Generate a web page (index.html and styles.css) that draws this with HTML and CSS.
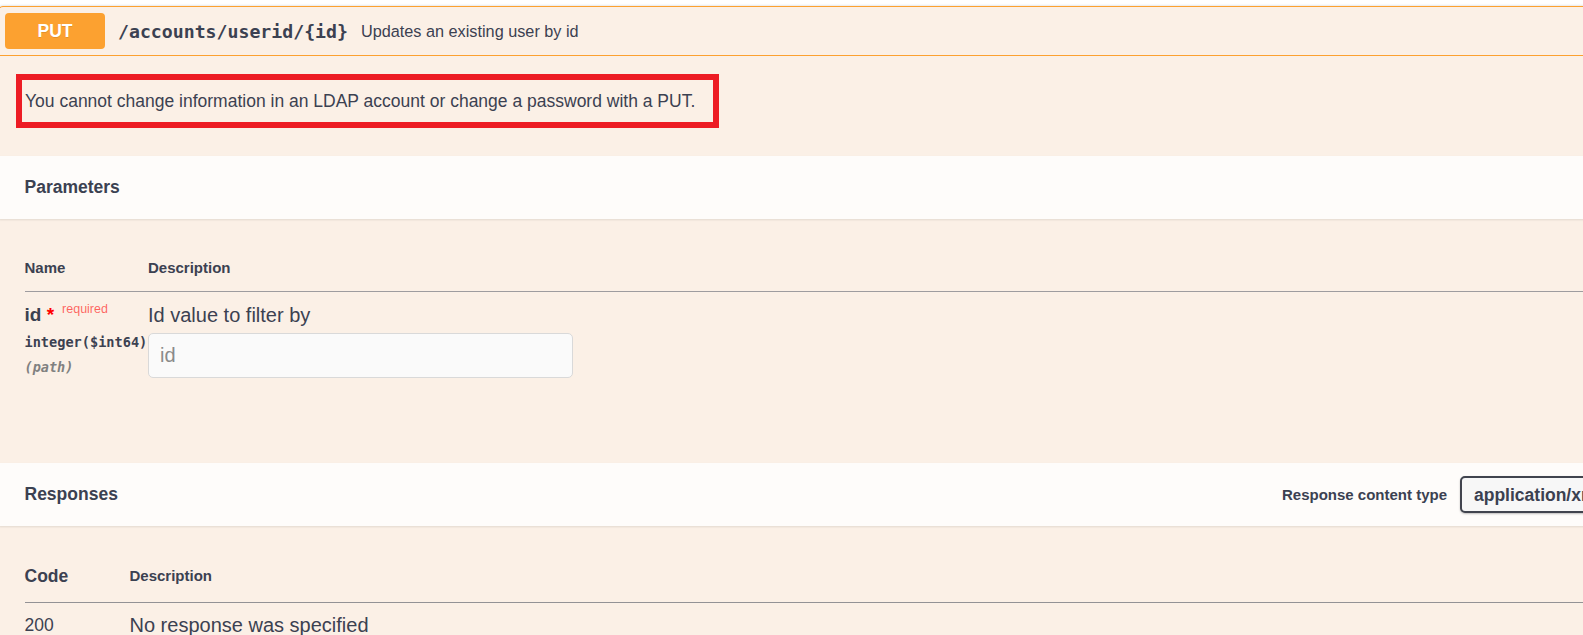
FILE: index.html
```html
<!DOCTYPE html>
<html lang="en">
<head>
<meta charset="utf-8">
<title>PUT /accounts/userid/{id}</title>
<link rel="stylesheet" href="styles.css">
</head>
<body>
<div class="opblock">
  <div class="summary">
    <span class="method">PUT</span>
    <span class="path">/accounts/userid/{id}</span>
    <span class="summary-desc">Updates an existing user by id</span>
  </div>
  <div class="desc-wrapper">
    <div class="note">You cannot change information in an LDAP account or change a password with a PUT.</div>
  </div>
  <div class="section-header">
    <h4 class="section-title">Parameters</h4>
  </div>
  <div class="table-container params">
    <table class="params-table">
      <thead>
        <tr>
          <th class="col-name">Name</th>
          <th class="col-desc">Description</th>
        </tr>
      </thead>
      <tbody>
        <tr>
          <td class="col-name">
            <div class="param-name">id<span class="star">&nbsp;*</span><span class="req">required</span></div>
            <div class="param-type">integer($int64)</div>
            <div class="param-in">(path)</div>
          </td>
          <td class="col-desc">
            <p class="param-desc">Id value to filter by</p>
            <input class="param-input" type="text" placeholder="id">
          </td>
        </tr>
      </tbody>
    </table>
  </div>
  <div class="section-header">
    <h4 class="section-title">Responses</h4>
    <div class="media-type">
      <span class="media-label">Response content type</span>
      <select class="media-select"><option>application/xml</option></select>
    </div>
  </div>
  <div class="table-container responses">
    <table class="resp-table">
      <thead>
        <tr>
          <th class="col-code">Code</th>
          <th class="col-rdesc">Description</th>
        </tr>
      </thead>
      <tbody>
        <tr>
          <td class="col-code code-val">200</td>
          <td class="col-rdesc rdesc-val">No response was specified</td>
        </tr>
      </tbody>
    </table>
  </div>
</div>
</body>
</html>
```
FILE: styles.css
```css
html, body {
  margin: 0;
  padding: 0;
  overflow: hidden;
  background: #ffffff;
}

body {
  font-family: "Liberation Sans", Arial, sans-serif;
  color: #3b4151;
}

.opblock {
  box-sizing: border-box;
  width: 1688px;
  margin: 6px 0 0 -2px;
  border: 1px solid #fca130;
  border-radius: 5px;
  background: #fbf0e6;
  box-shadow: 0 0 3px rgba(0, 0, 0, 0.19);
}

.summary {
  display: flex;
  align-items: center;
  padding: 6px 6px;
  border-bottom: 1px solid #fca130;
}

.method {
  box-sizing: border-box;
  width: 100px;
  height: 36px;
  display: flex;
  align-items: center;
  justify-content: center;
  background: #fca130;
  color: #fff;
  font-weight: 700;
  font-size: 17.5px;
  border-radius: 4px;
  text-shadow: 0 1px 0 rgba(0, 0, 0, 0.1);
}

.path {
  font-family: "DejaVu Sans Mono", "Liberation Mono", monospace;
  font-weight: 700;
  font-size: 18.2px;
  color: #3b4151;
  padding: 0 13px;
}

.summary-desc {
  font-size: 16.25px;
  color: #3b4151;
}

.desc-wrapper {
  padding: 18px 0 28px 17px;
}

.note {
  box-sizing: border-box;
  width: 703px;
  border: 6px solid #ed1c24;
  padding: 11px 3px;
  font-size: 17.5px;
  line-height: 20px;
  color: #3b4151;
}

.section-header {
  box-sizing: border-box;
  height: 63px;
  display: flex;
  align-items: center;
  padding: 0 25px 0 25.5px;
  background: rgba(255, 255, 255, 0.8);
  box-shadow: 0 1px 2px rgba(0, 0, 0, 0.1);
}

.section-title {
  margin: 0;
  font-size: 17.5px;
  font-weight: 700;
  color: #3b4151;
}

.media-type {
  margin-left: auto;
  display: flex;
  align-items: center;
  gap: 13px;
}

.media-label {
  font-size: 15px;
  font-weight: 700;
  color: #3b4151;
}

.media-select {
  -webkit-appearance: none;
  appearance: none;
  box-sizing: border-box;
  width: 200px;
  height: 37px;
  padding: 0 50px 0 12px;
  border: 2px solid #41444e;
  border-radius: 5px;
  background: #f7f7f7;
  box-shadow: 0 1px 2px 0 rgba(0, 0, 0, 0.25);
  font-family: "Liberation Sans", Arial, sans-serif;
  font-size: 17.5px;
  font-weight: 700;
  color: #3b4151;
}

.table-container {
  padding: 25px 25.5px;
}

.table-container.params {
  padding-bottom: 85px;
}

.table-container.responses {
  padding-bottom: 40px;
}

table {
  width: 100%;
  border-collapse: collapse;
}

th {
  text-align: left;
  font-weight: 700;
  padding: 15px 0 14px;
  line-height: 18px;
  font-size: 15px;
  color: #3b4151;
  border-bottom: 1px solid rgba(59, 65, 81, 0.28);
  vertical-align: middle;
}

td {
  vertical-align: top;
  padding: 12px 0 0;
}

.params-table .col-name {
  width: 123.5px;
}

.param-name {
  font-size: 19px;
  font-weight: 700;
  line-height: 22px;
  white-space: nowrap;
}

.star {
  color: #ff0000;
}

.req {
  position: relative;
  top: -8px;
  padding-left: 8px;
  font-size: 12.5px;
  font-weight: 400;
  color: rgba(255, 0, 0, 0.6);
}

.param-type {
  margin-top: 5px;
  font-family: "DejaVu Sans Mono", "Liberation Mono", monospace;
  font-size: 13.6px;
  font-weight: 700;
  line-height: 18px;
  color: #3b4151;
  white-space: nowrap;
}

.param-in {
  margin-top: 7px;
  font-family: "DejaVu Sans Mono", "Liberation Mono", monospace;
  font-size: 13.5px;
  font-weight: 700;
  font-style: italic;
  line-height: 18px;
  color: #808080;
}

.param-desc {
  margin: 0;
  font-size: 20px;
  line-height: 22px;
  color: #3b4151;
}

.param-input {
  display: block;
  box-sizing: border-box;
  margin-top: 7px;
  width: 425px;
  height: 45px;
  padding: 0 11px;
  border: 1px solid #d9d9d9;
  border-radius: 5px;
  background: #fafafa;
  font-family: "Liberation Sans", Arial, sans-serif;
  font-size: 20px;
  color: #3b4151;
}

.param-input::placeholder {
  color: #8a8a8a;
}

.resp-table th {
  padding: 15px 0 16px;
  line-height: 20px;
  border-bottom: 1px solid rgba(59, 65, 81, 0.32);
}

.resp-table th.col-code {
  width: 105px;
  font-size: 17.5px;
}

.resp-table td {
  padding-top: 11px;
  line-height: 23px;
}

.code-val {
  font-size: 17.5px;
}

.rdesc-val {
  font-size: 20px;
}
```
